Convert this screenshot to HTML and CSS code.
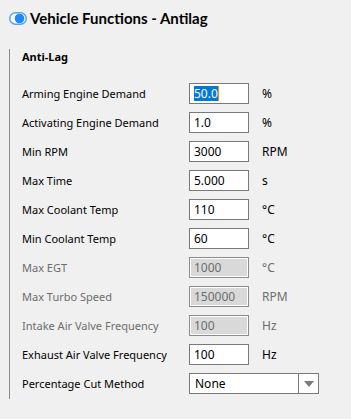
FILE: index.html
```html
<!DOCTYPE html>
<html lang="en">
<head>
    <meta charset="UTF-8">
    <title>Vehicle Functions - Antilag</title>
    <link rel="stylesheet" href="styles.css">
</head>
<body>
    <div class="header">
        <svg class="toggle" width="18" height="13" viewBox="0 0 18 13">
            <rect x="0.75" y="0.75" width="16.5" height="11.5" rx="5.75" fill="#ffffff" stroke="#4da3ff" stroke-width="1.5"/>
            <circle cx="10.5" cy="6.5" r="4.8" fill="#1e88ff"/>
        </svg>
        <h1>Vehicle Functions - Antilag</h1>
    </div>

    <div class="group">
        <h2>Anti-Lag</h2>

        <div class="row">
            <label>Arming Engine Demand</label>
            <div class="field"><span class="selected">50.0</span><span class="caret"></span></div>
            <span class="unit">%</span>
        </div>
        <div class="row">
            <label>Activating Engine Demand</label>
            <div class="field">1.0</div>
            <span class="unit">%</span>
        </div>
        <div class="row">
            <label>Min RPM</label>
            <div class="field">3000</div>
            <span class="unit">RPM</span>
        </div>
        <div class="row">
            <label>Max Time</label>
            <div class="field">5.000</div>
            <span class="unit">s</span>
        </div>
        <div class="row">
            <label>Max Coolant Temp</label>
            <div class="field">110</div>
            <span class="unit">°C</span>
        </div>
        <div class="row">
            <label>Min Coolant Temp</label>
            <div class="field">60</div>
            <span class="unit">°C</span>
        </div>
        <div class="row disabled">
            <label>Max EGT</label>
            <div class="field">1000</div>
            <span class="unit">°C</span>
        </div>
        <div class="row disabled">
            <label>Max Turbo Speed</label>
            <div class="field">150000</div>
            <span class="unit">RPM</span>
        </div>
        <div class="row disabled">
            <label>Intake Air Valve Frequency</label>
            <div class="field">100</div>
            <span class="unit">Hz</span>
        </div>
        <div class="row">
            <label>Exhaust Air Valve Frequency</label>
            <div class="field">100</div>
            <span class="unit">Hz</span>
        </div>
        <div class="row">
            <label>Percentage Cut Method</label>
            <div class="select">
                <span class="select-value">None</span>
                <span class="select-button"><span class="arrow"></span></span>
            </div>
        </div>
    </div>
</body>
</html>
```

FILE: styles.css
```css
body {
    margin: 0;
    background-color: #f0f0f0;
    font-family: "Noto Sans", "Open Sans", sans-serif;
    font-size: 11px;
    color: #000;
}
.header {
    display: flex;
    align-items: center;
    gap: 3px;
    height: 24px;
    padding: 6px 0 0 9px;
}
.toggle {
    display: block;
}
h1 {
    margin: 0;
    font-family: Lato, "Noto Sans", sans-serif;
    font-size: 15px;
    font-weight: bold;
}
.group {
    margin: 19px 0 0 9px;
    border-left: 1px solid #8c8c8c;
    padding: 0 0 1px 12px;
    width: 320px;
}
h2 {
    margin: 0 0 14px 0;
    font-size: 11px;
    font-weight: bold;
    line-height: 16px;
}
.row {
    display: flex;
    align-items: center;
    height: 29px;
}
.row label {
    width: 167px;
}
.field {
    box-sizing: border-box;
    width: 60px;
    height: 21px;
    border: 1px solid #7a7a7a;
    background-color: #fff;
    padding: 0 4px;
    line-height: 19px;
    font-size: 12px;
    display: flex;
    align-items: center;
}
.unit {
    margin-left: 13px;
    font-size: 12px;
}
.selected {
    background-color: #0078d7;
    color: #fff;
    line-height: 15px;
}
.caret {
    display: inline-block;
    width: 1px;
    height: 15px;
    background-color: #ff8a00;
}
.disabled {
    color: #6d6d6d;
}
.disabled .field {
    background-color: #d9d9d9;
    border-color: #8c8c8c;
    box-shadow: inset 0 0 0 1px #fff;
}
.select {
    box-sizing: border-box;
    width: 130px;
    height: 21px;
    border: 1px solid #7a7a7a;
    background-color: #fff;
    display: flex;
    font-size: 12px;
}
.select-value {
    flex: 1;
    padding-left: 5px;
    line-height: 19px;
}
.select-button {
    width: 19px;
    border-left: 1px solid #7a7a7a;
    display: flex;
    align-items: center;
    justify-content: center;
}
.arrow {
    width: 0;
    height: 0;
    border-left: 5px solid transparent;
    border-right: 5px solid transparent;
    border-top: 6px solid #7a7a7a;
}
```
